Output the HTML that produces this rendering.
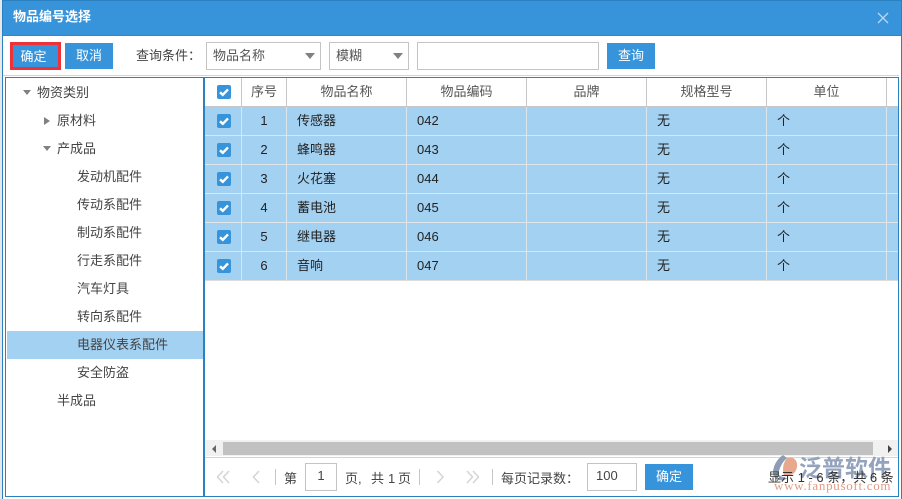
<!DOCTYPE html>
<html><head><meta charset="utf-8"><style>
html,body{margin:0;padding:0;width:902px;height:499px;overflow:hidden;background:#fff}
body{position:relative;font-family:"Liberation Sans","Noto Sans CJK SC",sans-serif;font-size:13px;color:#444}
.a{position:absolute;box-sizing:border-box;white-space:nowrap}
.btn{background:#3794db;color:#fff;text-align:center;height:26px;line-height:26px;top:43px;width:48px}
.inp{border:1px solid #c4c4c4;background:#fff}
.t{line-height:18px;height:18px}
.th{top:78px;height:28px;line-height:27px;text-align:center;color:#555}
.c{line-height:28px;height:28px;color:#222}
.v{background:#c6c6c6;width:1px}
.cb{width:14px;height:14px;background:#3794db;border-radius:2px;left:217px}
.cb svg{display:block}
</style></head><body>
<div class="a" style="left:0;top:0;width:902px;height:499px;background:#fff"></div>
<div class="a" style="left:0;top:0;width:2px;height:499px;background:#e8e8e8"></div>
<div class="a" style="left:2px;top:0;width:900px;height:499px;border:1px solid #2b80c0;border-bottom:none;border-right:none"></div>
<div class="a" style="left:901px;top:0;width:1px;height:499px;background:#2b80c0"></div>
<div class="a" style="left:3px;top:1px;width:898px;height:35px;background:#3794db;border-bottom:1px solid #2f86c8"></div>
<div class="a" style="left:13px;top:8px;color:#fff;font-weight:bold;font-size:13px;line-height:18px">物品编号选择</div>
<svg class="a" style="left:877px;top:12px" width="12" height="12" viewBox="0 0 12 12"><path d="M1 1L11 11M11 1L1 11" stroke="#b9d8f0" stroke-width="1.3" fill="none"/></svg>

<div class="a btn" style="left:10px;top:42px;width:51px;height:28px;border:3px solid #ee3138;line-height:24px;padding-right:4px;background:#3794db">确定</div>
<div class="a btn" style="left:65px">取消</div>
<div class="a t" style="left:136px;top:47px;color:#444">查询条件：</div>
<div class="a inp" style="left:206px;top:42px;width:115px;height:28px;line-height:26px;padding-left:6px;color:#555">物品名称</div>
<div class="a" style="left:305px;top:53px;width:0;height:0;border:5px solid transparent;border-top:6px solid #808080;border-bottom:none"></div>
<div class="a inp" style="left:329px;top:42px;width:80px;height:28px;line-height:26px;padding-left:6px;color:#555">模糊</div>
<div class="a" style="left:393px;top:53px;width:0;height:0;border:5px solid transparent;border-top:6px solid #808080;border-bottom:none"></div>
<div class="a inp" style="left:417px;top:42px;width:182px;height:28px"></div>
<div class="a btn" style="left:607px">查询</div>
<div class="a" style="left:3px;top:75px;width:896px;height:1px;background:#d4d4d4"></div>

<!-- panels -->
<div class="a" style="left:5px;top:77px;width:894px;height:420px;border:1px solid #2b80c0"></div>
<div class="a" style="left:203px;top:77px;width:2px;height:420px;background:#2b80c0"></div>

<!-- tree -->
<div class="a" style="left:7px;top:331px;width:196px;height:28px;background:#a3d1f2"></div>
<div class="a" style="left:23px;top:90px;width:0;height:0;border:4px solid transparent;border-top:5px solid #808080;border-bottom:none"></div>
<div class="a t" style="left:37px;top:84px">物资类别</div>
<div class="a" style="left:44px;top:117px;width:0;height:0;border:4px solid transparent;border-left:6px solid #808080;border-right:none"></div>
<div class="a t" style="left:57px;top:112px">原材料</div>
<div class="a" style="left:43px;top:146px;width:0;height:0;border:4px solid transparent;border-top:5px solid #808080;border-bottom:none"></div>
<div class="a t" style="left:57px;top:140px">产成品</div>
<div class="a t" style="left:77px;top:168px">发动机配件</div>
<div class="a t" style="left:77px;top:196px">传动系配件</div>
<div class="a t" style="left:77px;top:224px">制动系配件</div>
<div class="a t" style="left:77px;top:252px">行走系配件</div>
<div class="a t" style="left:77px;top:280px">汽车灯具</div>
<div class="a t" style="left:77px;top:308px">转向系配件</div>
<div class="a t" style="left:77px;top:336px">电器仪表系配件</div>
<div class="a t" style="left:77px;top:364px">安全防盗</div>
<div class="a t" style="left:57px;top:392px">半成品</div>

<!-- table header -->
<div class="a" style="left:205px;top:106px;width:693px;height:1px;background:#c6c6c6"></div>
<div class="a th" style="left:242px;width:44px">序号</div>
<div class="a th" style="left:287px;width:119px">物品名称</div>
<div class="a th" style="left:407px;width:119px">物品编码</div>
<div class="a th" style="left:527px;width:119px">品牌</div>
<div class="a th" style="left:647px;width:119px">规格型号</div>
<div class="a th" style="left:767px;width:119px">单位</div>

<!-- rows -->
<div class="a" style="left:205px;top:107px;width:693px;height:173px;background:#a3d1f2"></div>
<div class="a" style="left:205px;top:135px;width:693px;height:1px;background:#dfe6ea"></div>
<div class="a" style="left:205px;top:164px;width:693px;height:1px;background:#dfe6ea"></div>
<div class="a" style="left:205px;top:193px;width:693px;height:1px;background:#dfe6ea"></div>
<div class="a" style="left:205px;top:222px;width:693px;height:1px;background:#dfe6ea"></div>
<div class="a" style="left:205px;top:251px;width:693px;height:1px;background:#dfe6ea"></div>
<div class="a" style="left:205px;top:280px;width:693px;height:1px;background:#dcdcdc"></div>

<div class="a" style="left:241px;top:78px;width:1px;height:28px;background:#c6c6c6"></div>
<div class="a" style="left:286px;top:78px;width:1px;height:28px;background:#c6c6c6"></div>
<div class="a" style="left:406px;top:78px;width:1px;height:28px;background:#c6c6c6"></div>
<div class="a" style="left:526px;top:78px;width:1px;height:28px;background:#c6c6c6"></div>
<div class="a" style="left:646px;top:78px;width:1px;height:28px;background:#c6c6c6"></div>
<div class="a" style="left:766px;top:78px;width:1px;height:28px;background:#c6c6c6"></div>
<div class="a" style="left:886px;top:78px;width:1px;height:28px;background:#c6c6c6"></div>
<div class="a" style="left:241px;top:107px;width:1px;height:173px;background:#dfe6ea"></div>
<div class="a" style="left:286px;top:107px;width:1px;height:173px;background:#dfe6ea"></div>
<div class="a" style="left:406px;top:107px;width:1px;height:173px;background:#dfe6ea"></div>
<div class="a" style="left:526px;top:107px;width:1px;height:173px;background:#dfe6ea"></div>
<div class="a" style="left:646px;top:107px;width:1px;height:173px;background:#dfe6ea"></div>
<div class="a" style="left:766px;top:107px;width:1px;height:173px;background:#dfe6ea"></div>
<div class="a" style="left:886px;top:107px;width:1px;height:173px;background:#dfe6ea"></div>

<div class="a cb" style="top:85px"><svg width="14" height="14" viewBox="0 0 14 14"><path d="M3 7.3L5.8 9.8L11 4.4" stroke="#fff" stroke-width="2.4" fill="none"/></svg></div>
<div class="a cb" style="top:114px"><svg width="14" height="14" viewBox="0 0 14 14"><path d="M3 7.3L5.8 9.8L11 4.4" stroke="#fff" stroke-width="2.4" fill="none"/></svg></div>
<div class="a cb" style="top:143px"><svg width="14" height="14" viewBox="0 0 14 14"><path d="M3 7.3L5.8 9.8L11 4.4" stroke="#fff" stroke-width="2.4" fill="none"/></svg></div>
<div class="a cb" style="top:172px"><svg width="14" height="14" viewBox="0 0 14 14"><path d="M3 7.3L5.8 9.8L11 4.4" stroke="#fff" stroke-width="2.4" fill="none"/></svg></div>
<div class="a cb" style="top:201px"><svg width="14" height="14" viewBox="0 0 14 14"><path d="M3 7.3L5.8 9.8L11 4.4" stroke="#fff" stroke-width="2.4" fill="none"/></svg></div>
<div class="a cb" style="top:230px"><svg width="14" height="14" viewBox="0 0 14 14"><path d="M3 7.3L5.8 9.8L11 4.4" stroke="#fff" stroke-width="2.4" fill="none"/></svg></div>
<div class="a cb" style="top:259px"><svg width="14" height="14" viewBox="0 0 14 14"><path d="M3 7.3L5.8 9.8L11 4.4" stroke="#fff" stroke-width="2.4" fill="none"/></svg></div>

<div class="a c" style="left:242px;width:44px;text-align:center;top:107px">1</div>
<div class="a c" style="left:297px;top:107px">传感器</div>
<div class="a c" style="left:417px;top:107px">042</div>
<div class="a c" style="left:657px;top:107px">无</div>
<div class="a c" style="left:777px;top:107px">个</div>

<div class="a c" style="left:242px;width:44px;text-align:center;top:136px">2</div>
<div class="a c" style="left:297px;top:136px">蜂鸣器</div>
<div class="a c" style="left:417px;top:136px">043</div>
<div class="a c" style="left:657px;top:136px">无</div>
<div class="a c" style="left:777px;top:136px">个</div>

<div class="a c" style="left:242px;width:44px;text-align:center;top:165px">3</div>
<div class="a c" style="left:297px;top:165px">火花塞</div>
<div class="a c" style="left:417px;top:165px">044</div>
<div class="a c" style="left:657px;top:165px">无</div>
<div class="a c" style="left:777px;top:165px">个</div>

<div class="a c" style="left:242px;width:44px;text-align:center;top:194px">4</div>
<div class="a c" style="left:297px;top:194px">蓄电池</div>
<div class="a c" style="left:417px;top:194px">045</div>
<div class="a c" style="left:657px;top:194px">无</div>
<div class="a c" style="left:777px;top:194px">个</div>

<div class="a c" style="left:242px;width:44px;text-align:center;top:223px">5</div>
<div class="a c" style="left:297px;top:223px">继电器</div>
<div class="a c" style="left:417px;top:223px">046</div>
<div class="a c" style="left:657px;top:223px">无</div>
<div class="a c" style="left:777px;top:223px">个</div>

<div class="a c" style="left:242px;width:44px;text-align:center;top:252px">6</div>
<div class="a c" style="left:297px;top:252px">音响</div>
<div class="a c" style="left:417px;top:252px">047</div>
<div class="a c" style="left:657px;top:252px">无</div>
<div class="a c" style="left:777px;top:252px">个</div>

<!-- scrollbar -->
<div class="a" style="left:205px;top:440px;width:693px;height:16px;background:#f1f1f1"></div>
<div class="a" style="left:223px;top:442px;width:650px;height:13px;background:#c1c1c1"></div>
<div class="a" style="left:212px;top:445px;width:0;height:0;border:4px solid transparent;border-right:4px solid #666;border-left:none"></div>
<div class="a" style="left:888px;top:445px;width:0;height:0;border:4px solid transparent;border-left:4px solid #444;border-right:none"></div>
<div class="a" style="left:205px;top:457px;width:693px;height:1px;background:#d4d4d4"></div>

<!-- pager -->
<svg class="a" style="left:215px;top:469px" width="270" height="16" viewBox="0 0 270 16">
<path d="M8 2L2.5 8L8 14M14 2L8.5 8L14 14" stroke="#d6d6d6" stroke-width="1.6" fill="none"/>
<path d="M44 2L38.5 8L44 14" stroke="#d6d6d6" stroke-width="1.6" fill="none"/>
<path d="M222.500 2L228 8L222.500 14" stroke="#d6d6d6" stroke-width="1.6" fill="none"/>
<path d="M252 2L257.500 8L252 14M258 2L263.500 8L258 14" stroke="#d6d6d6" stroke-width="1.6" fill="none"/>
</svg>
<div class="a v" style="left:275px;top:469px;height:16px"></div>
<div class="a t" style="left:284px;top:470px">第</div>
<div class="a inp" style="left:305px;top:463px;width:32px;height:28px;text-align:center;line-height:24px;color:#444">1</div>
<div class="a t" style="left:345px;top:470px">页,</div>
<div class="a t" style="left:371px;top:470px">共</div>
<div class="a t" style="left:388px;top:470px">1</div>
<div class="a t" style="left:398px;top:470px">页</div>
<div class="a v" style="left:419px;top:469px;height:16px"></div>
<div class="a v" style="left:492px;top:469px;height:16px"></div>
<div class="a t" style="left:501px;top:470px">每页记录数：</div>
<div class="a inp" style="left:587px;top:463px;width:50px;height:28px;line-height:24px;padding-left:8px;color:#444">100</div>
<div class="a btn" style="left:645px;top:464px">确定</div>

<!-- watermark -->
<svg class="a" style="left:770px;top:454px" width="32" height="30" viewBox="0 0 32 30">
<path d="M13 1C7 5 3 12 3 19C3 22 5 25 8 25C8 17 11 9 17 4Z" fill="#8d9db5"/>
<path d="M17 4C23 2 28 6 27 13C26 19 21 23 14 22C12 15 13 9 17 4Z" fill="#e8a88e"/>
<path d="M9 21C12 23 15 24 18 24C15 26 12 27 9 26Z" fill="#8d9db5"/>
</svg>
<div class="a" style="left:799px;top:454px;font-size:23px;line-height:28px;color:#94a3bd;font-weight:bold">泛普软件</div>
<div class="a" style="left:774px;top:479px;font-family:'Liberation Serif',serif;font-size:13px;line-height:14px;color:#e29b85;letter-spacing:.7px">www.fanpusoft.com</div>
<div class="a t" style="left:768px;top:469px;color:#333">显示 1 - 6 条，共 6 条</div>
</body></html>
